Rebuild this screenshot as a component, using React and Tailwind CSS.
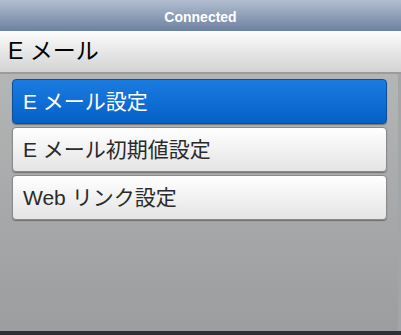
import React from "react";

const items = [
  { label: "E メール設定", active: true },
  { label: "E メール初期値設定" },
  { label: "Web リンク設定" },
];

export default function App() {
  return (
    <div
      className="w-[401px] h-[335px] flex flex-col overflow-hidden"
      style={{ fontFamily: '"Liberation Sans", "Noto Sans CJK JP", sans-serif' }}
    >
      {/* status bar */}
      <div className="h-[31px] flex items-center justify-center bg-gradient-to-b from-[#b3bfd0] to-[#6c81a1]">
        <span className="text-white text-[14px] font-bold pt-[4px]">Connected</span>
      </div>

      {/* title */}
      <div className="h-[43px] flex items-center pl-[8px] bg-gradient-to-b from-[#fcfcfc] to-[#d3d3d3] border-b-[2px] border-[#9c9c9c]">
        <span className="text-[23px] text-black leading-none">E メール</span>
      </div>

      {/* list */}
      <div className="flex-1 flex bg-gradient-to-b from-[#b4b5b5] to-[#9c9d9f]">
        <div className="flex-1 flex flex-col gap-[3px] pt-[5px] pl-[12px] pr-[11px]">
          {items.map((it) =>
            it.active ? (
              <div
                key={it.label}
                className="h-[45px] flex items-center pl-[10px] rounded-[4px] bg-gradient-to-b from-[#1a7ce0] to-[#0560c8] border border-[#0a4e9e] shadow-[0_1px_1px_rgba(0,0,0,0.35)]"
              >
                <span className="text-[21px] text-white leading-none">{it.label}</span>
              </div>
            ) : (
              <div
                key={it.label}
                className="h-[45px] flex items-center pl-[10px] rounded-[4px] bg-gradient-to-b from-[#ffffff] to-[#e4e4e4] border border-[#8a8a8a] shadow-[0_1px_1px_rgba(0,0,0,0.35)]"
              >
                <span className="text-[21px] text-[#2a2a2a] leading-none">{it.label}</span>
              </div>
            )
          )}
        </div>
        <div className="w-[3px] bg-[#a3a6a8]" />
      </div>

      <div className="h-[4px] bg-[#2e2f34]" />
    </div>
  );
}
